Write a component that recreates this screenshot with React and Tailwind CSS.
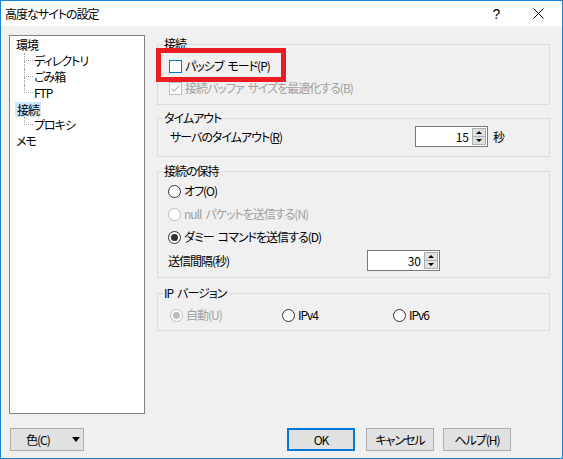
import React from "react";

const FONT = "font-['Noto_Sans_CJK_JP',sans-serif] [font-feature-settings:'palt'] tracking-[-1px]";

function T({ children }) {
  const parts = String(children).split(" ");
  return (
    <>
      {parts.map((p, i) => (
        <React.Fragment key={i}>
          {i > 0 && <span className="inline-block w-[4px]" />}
          {p}
        </React.Fragment>
      ))}
    </>
  );
}

function TreeChild({ label, last }) {
  return (
    <div className="h-[16px] flex">
      <div className="ml-[14px] w-[9px] flex flex-col">
        <div className="h-[8px] border-l border-b border-dotted border-[#a0a0a0]" />
        {!last && <div className="flex-1 border-l border-dotted border-[#a0a0a0]" />}
      </div>
      <span className="ml-[1px] leading-[16px]">{label}</span>
    </div>
  );
}

function TreeRoot({ label, selected }) {
  return (
    <div className="h-[16px] flex items-center pl-[5px]">
      <span className={selected ? "px-[2px] bg-[#cce8ff] leading-[15px]" : "px-[1px] leading-[16px]"}>{label}</span>
    </div>
  );
}

function Group({ title, className = "", children }) {
  return (
    <fieldset className={"border border-[#dcdcdc] " + className}>
      <legend className="ml-[5px] px-[1px] leading-[16px]">
        <T>{title}</T>
      </legend>
      {children}
    </fieldset>
  );
}

function Checkbox({ checked, disabled, focus }) {
  const border = disabled ? "border-[#bcbcbc]" : focus ? "border-[#0078d7]" : "border-[#333333]";
  return (
    <div className={"w-[13px] h-[13px] border bg-white flex items-center justify-center shrink-0 " + border}>
      {checked && (
        <svg width="11" height="11" viewBox="0 0 11 11">
          <polyline points="1.5,5.5 4,8 9.5,2.5" fill="none" stroke={disabled ? "#bcbcbc" : "#333"} strokeWidth="1.3" />
        </svg>
      )}
    </div>
  );
}

function Radio({ checked, disabled }) {
  const border = disabled ? "border-[#bcbcbc]" : "border-[#333333]";
  return (
    <div className={"w-[13px] h-[13px] rounded-full border bg-white flex items-center justify-center shrink-0 " + border}>
      {checked && <div className={"w-[7px] h-[7px] rounded-full " + (disabled ? "bg-[#bcbcbc]" : "bg-[#333333]")} />}
    </div>
  );
}

function Spin({ value }) {
  return (
    <div className="w-[73px] h-[21px] border border-[#7a7a7a] bg-white flex">
      <div className="flex-1 flex items-center justify-end pr-[3px] leading-[16px] tracking-normal">{value}</div>
      <div className="w-[14px] my-[1px] mr-[1px] flex flex-col">
        <div className="flex-1 border border-[#adadad] bg-[#e1e1e1] flex items-center justify-center">
          <div className="w-0 h-0 border-x-[3px] border-x-transparent border-b-[3px] border-b-black" />
        </div>
        <div className="flex-1 border border-t-0 border-[#adadad] bg-[#e1e1e1] flex items-center justify-center">
          <div className="w-0 h-0 border-x-[3px] border-x-transparent border-t-[3px] border-t-black" />
        </div>
      </div>
    </div>
  );
}

function Button({ children, primary, className = "" }) {
  return (
    <div
      className={
        "h-[23px] w-[68px] bg-[#e1e1e1] flex items-center justify-center leading-[16px] " +
        (primary ? "border-2 border-[#0078d7]" : "border border-[#adadad]") +
        " " +
        className
      }
    >
      {children}
    </div>
  );
}

export default function App() {
  return (
    <div className={"relative w-[563px] h-[459px] border border-[#1883d7] bg-[#f0f0f0] flex flex-col text-[12px] text-black " + FONT}>
      {/* title bar */}
      <div className="h-[25px] bg-white flex items-center pl-[4px] shrink-0">
        <span className="leading-[16px]">高度なサイトの設定</span>
        <div className="ml-auto flex items-center h-full">
          <div className="w-[46px] flex justify-center pl-[6px] text-[14px] font-['Liberation_Sans',sans-serif] leading-[16px]">?</div>
          <div className="w-[46px] flex justify-center pr-[2px]">
            <svg width="11" height="11" viewBox="0 0 11 11">
              <line x1="0.5" y1="0.5" x2="10.5" y2="10.5" stroke="#000" strokeWidth="1" />
              <line x1="10.5" y1="0.5" x2="0.5" y2="10.5" stroke="#000" strokeWidth="1" />
            </svg>
          </div>
        </div>
      </div>

      {/* content */}
      <div className="flex pt-[9px] pl-[8px]">
        <div className="w-[136px] h-[379px] bg-white border border-[#828282] pt-[1px]">
          <TreeRoot label="環境" />
          <TreeChild label="ディレクトリ" />
          <TreeChild label="ごみ箱" />
          <TreeChild label="FTP" last />
          <TreeRoot label="接続" selected />
          <TreeChild label="プロキシ" last />
          <TreeRoot label="メモ" />
        </div>

        <div className="ml-[12px] mt-[1px] w-[393px] flex flex-col">
          <Group title="接続">
            <div className="pt-[4px] pb-[6px] pl-[11px] flex flex-col gap-[2px]">
              <div className="h-[20px] flex items-center">
                <Checkbox focus />
                <span className="ml-[3px] leading-[16px]">
                  <T>パッシブ モード(P)</T>
                </span>
              </div>
              <div className="h-[20px] flex items-center text-[#a0a0a0]">
                <Checkbox checked disabled />
                <span className="ml-[3px] leading-[16px]">
                  <T>接続バッファ サイズを最適化する(B)</T>
                </span>
              </div>
            </div>
          </Group>

          <Group title="タイムアウト" className="mt-[5px]">
            <div className="pb-[9px] pl-[12px] flex items-center h-[30px]">
              <div className="h-[21px] flex items-center w-full">
                <span className="leading-[16px]">
                  サーバのタイムアウト(<span className="underline">R</span>)
                </span>
                <div className="ml-auto mr-[45px] flex items-center">
                  <Spin value="15" />
                  <span className="ml-[5px] leading-[16px]">秒</span>
                </div>
              </div>
            </div>
          </Group>

          <Group title="接続の保持" className="mt-[6px]">
            <div className="pt-[2px] pb-[6px] pl-[10px] flex flex-col gap-[3px]">
              <div className="h-[20px] flex items-center">
                <Radio />
                <span className="ml-[3px] leading-[16px]">オフ(O)</span>
              </div>
              <div className="h-[20px] flex items-center text-[#a0a0a0]">
                <Radio disabled />
                <span className="ml-[3px] leading-[16px]">
                  <T>null パケットを送信する(N)</T>
                </span>
              </div>
              <div className="h-[20px] flex items-center">
                <Radio checked />
                <span className="ml-[3px] leading-[16px]">
                  <T>ダミー コマンドを送信する(D)</T>
                </span>
              </div>
              <div className="h-[21px] flex items-center">
                <span className="leading-[16px]">送信間隔(秒)</span>
                <div className="ml-auto mr-[109px]">
                  <Spin value="30" />
                </div>
              </div>
            </div>
          </Group>

          <Group title="IP バージョン" className="mt-[7px]">
            <div className="pt-[4px] pb-[5px] pl-[12px] flex items-center">
              <div className="w-[112px] h-[20px] flex items-center text-[#a0a0a0]">
                <Radio checked disabled />
                <span className="ml-[3px] leading-[16px]">自動(U)</span>
              </div>
              <div className="w-[111px] h-[20px] flex items-center">
                <Radio />
                <span className="ml-[3px] leading-[16px]">IPv4</span>
              </div>
              <div className="h-[20px] flex items-center">
                <Radio />
                <span className="ml-[3px] leading-[16px]">IPv6</span>
              </div>
            </div>
          </Group>
        </div>
      </div>

      {/* bottom buttons */}
      <div className="mt-[14px] pl-[9px] pr-[51px] flex items-center">
        <div className="h-[23px] w-[74px] bg-[#e1e1e1] border border-[#adadad] flex items-center pl-[15px] pr-[3px]">
          <span className="leading-[16px]">色(C)</span>
          <div className="ml-auto w-0 h-0 border-x-[4px] border-x-transparent border-t-[5px] border-t-black" />
        </div>
        <Button primary className="ml-auto">OK</Button>
        <Button className="ml-[11px]">キャンセル</Button>
        <Button className="ml-[9px]">ヘルプ(H)</Button>
      </div>

      {/* red annotation box */}
      <div className="absolute left-[155px] top-[47px] w-[130px] h-[34px] border-[5px] border-[#ed1c24] pointer-events-none" />
    </div>
  );
}
